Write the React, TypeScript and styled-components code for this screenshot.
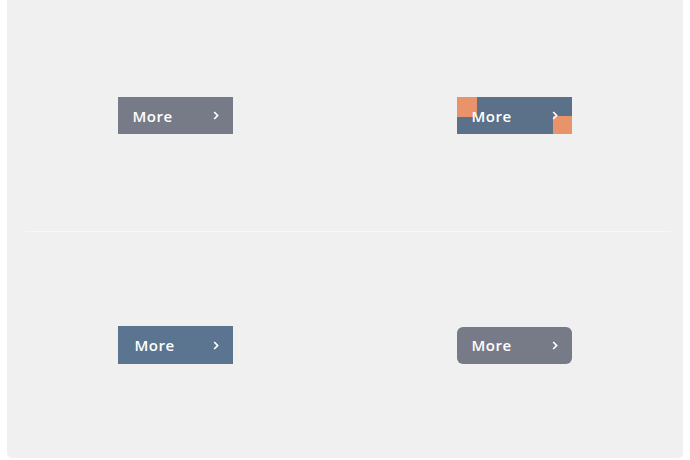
import React from 'react'
import styled, { createGlobalStyle, css } from 'styled-components'

const Global = createGlobalStyle`
  html, body {
    margin: 0;
    padding: 0;
    background: #ffffff;
  }
  body {
    font-family: 'Open Sans', 'Liberation Sans', sans-serif;
  }
`

const Panel = styled.div`
  width: 676px;
  height: 458px;
  margin-left: 7px;
  background: #f0f0f0;
  border-bottom-left-radius: 5px;
  border-bottom-right-radius: 5px;
  display: grid;
  grid-template-columns: 336px 1fr;
  grid-template-rows: 231px 1px 1fr;
`

const Divider = styled.div`
  grid-column: 1 / span 2;
  margin: 0 12px 0 18px;
  background: #f7f7f7;
`

const Cell = styled.div<{ $right?: boolean }>`
  display: flex;
  align-items: center;
  justify-content: center;
  padding-left: ${(p) => (p.$right ? '2px' : '0')};
`

type Variant = 'grey' | 'corners' | 'blue' | 'rounded'

const Button = styled.a<{ $variant: Variant }>`
  position: relative;
  box-sizing: border-box;
  width: 115px;
  height: 37px;
  display: flex;
  align-items: center;
  justify-content: space-between;
  padding: 0 14px 0 ${(p) => (p.$variant === 'blue' ? 17 : 15)}px;
  color: #ffffff;
  font-size: 15px;
  font-weight: 600;
  letter-spacing: 0.5px;
  text-decoration: none;
  overflow: hidden;
  cursor: pointer;
  background: ${(p) =>
    p.$variant === 'blue' || p.$variant === 'corners' ? '#5b7189' : '#777b87'};
  border-radius: ${(p) => (p.$variant === 'rounded' ? '6px' : '0')};
  ${(p) =>
    p.$variant === 'blue' &&
    css`
      height: 38px;
      background: #5b7590;
    `}
`

const Corner = styled.span<{ $pos: 'tl' | 'br' }>`
  position: absolute;
  width: 20px;
  height: 20px;
  background: #e8936a;
  ${(p) =>
    p.$pos === 'tl'
      ? css`
          top: 0;
          left: 0;
        `
      : css`
          bottom: 0;
          right: 0;
          width: 19px;
          height: 18px;
        `}
`

const Label = styled.span`
  position: relative;
  z-index: 1;
`

const Chevron = () => (
  <svg width="6" height="9" viewBox="0 0 6 9" style={{ position: 'relative', zIndex: 1 }}>
    <path d="M1.2 1 L4.6 4.5 L1.2 8" fill="none" stroke="#fff" strokeWidth="1.7" />
  </svg>
)

const MoreButton = ({ variant }: { variant: Variant }) => (
  <Button $variant={variant}>
    {variant === 'corners' && (
      <>
        <Corner $pos="tl" />
        <Corner $pos="br" />
      </>
    )}
    <Label>More</Label>
    <Chevron />
  </Button>
)

export default function App() {
  return (
    <>
      <Global />
      <Panel>
        <Cell>
          <MoreButton variant="grey" />
        </Cell>
        <Cell $right>
          <MoreButton variant="corners" />
        </Cell>
        <Divider />
        <Cell>
          <MoreButton variant="blue" />
        </Cell>
        <Cell $right>
          <MoreButton variant="rounded" />
        </Cell>
      </Panel>
    </>
  )
}
